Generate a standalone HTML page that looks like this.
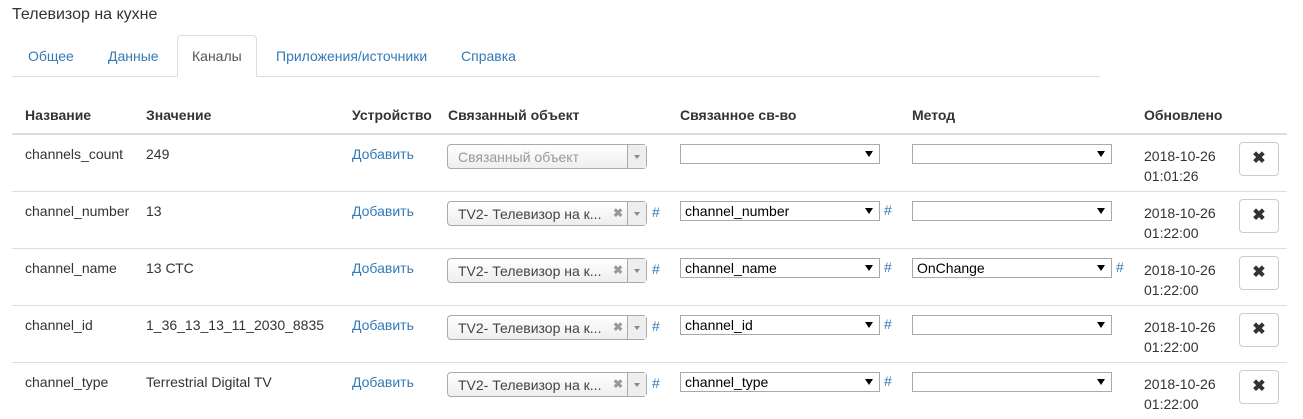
<html><head><style>
body{margin:0;width:1303px;height:419px;overflow:hidden;background:#fff;font-family:"Liberation Sans",sans-serif;font-size:14px;color:#333;position:relative}
.a{position:absolute;white-space:nowrap}
.l{color:#337ab7}
.th{font-weight:bold}
.hr{position:absolute;left:12px;width:1275px;height:1px;background:#ddd}
.s2{position:absolute;width:200px;height:25px;border:1px solid #aaa;border-radius:4px;background:linear-gradient(#fff,#eee);box-sizing:border-box;font-size:14px;color:#444}
.s2 span{position:absolute;left:10px;top:4px}
.s2 .x{left:165px;top:4px;color:#999;font-weight:bold;font-size:12px}
.s2 .ar{position:absolute;right:0;top:0;width:18px;height:23px;border-left:1px solid #aaa;background:#eee}
.s2 .ar:after{content:"";position:absolute;left:6px;top:10px;border:3px solid transparent;border-top:4px solid #888}
.sel{position:absolute;width:200px;height:20px;border:1px solid #a9a9a9;box-sizing:border-box;background:#fff;font-size:14px;color:#000}
.sel span{position:absolute;left:4px;top:1px}
.sel:after{content:"";position:absolute;right:6px;top:6px;border:4px solid transparent;border-top:6px solid #000;border-bottom:0}
.btn{position:absolute;left:1239px;width:40px;height:34px;border:1px solid #ccc;border-radius:4px;box-sizing:border-box;text-align:center;line-height:32px;font-weight:bold;font-size:16px;color:#333}
</style></head><body>
<div class="a" style="left:12px;top:6px;font-size:16px">Телевизор на кухне</div>
<div class="a" style="left:12px;top:76px;width:1088px;height:1px;background:#ddd"></div>
<div class="a" style="left:177px;top:35px;width:80px;height:42px;border:1px solid #ddd;border-bottom:1px solid #fff;border-radius:4px 4px 0 0;box-sizing:border-box;background:#fff"></div>
<div class="a l" style="left:28px;top:48px">Общее</div>
<div class="a l" style="left:108px;top:48px">Данные</div>
<div class="a" style="left:192px;top:48px;color:#555">Каналы</div>
<div class="a l" style="left:276px;top:48px">Приложения/источники</div>
<div class="a l" style="left:461px;top:48px">Справка</div>
<div class="a th" style="left:25px;top:107px">Название</div>
<div class="a th" style="left:146px;top:107px">Значение</div>
<div class="a th" style="left:352px;top:107px">Устройство</div>
<div class="a th" style="left:448px;top:107px">Связанный объект</div>
<div class="a th" style="left:680px;top:107px">Связанное св-во</div>
<div class="a th" style="left:912px;top:107px">Метод</div>
<div class="a th" style="left:1144px;top:107px">Обновлено</div>
<div class="hr" style="top:133px;height:2px"></div>

<div class="a" style="left:25px;top:146px">channels_count</div><div class="a" style="left:146px;top:146px">249</div><div class="a l" style="left:352px;top:146px">Добавить</div>
<div class="s2" style="left:447px;top:144px"><span style="color:#999">Связанный объект</span><div class="ar"></div></div>
<div class="sel" style="left:680px;top:144px"></div><div class="sel" style="left:912px;top:144px"></div>
<div class="a" style="left:1144px;top:146px;line-height:20px">2018-10-26<br>01:01:26</div><div class="btn" style="top:142px">✖</div>
<div class="hr" style="top:191px"></div>

<div class="a" style="left:25px;top:203px">channel_number</div><div class="a" style="left:146px;top:203px">13</div><div class="a l" style="left:352px;top:203px">Добавить</div>
<div class="s2" style="left:447px;top:201px"><span>TV2- Телевизор на к...</span><span class="x">✖</span><div class="ar"></div></div><div class="a l" style="left:652px;top:204px">#</div>
<div class="sel" style="left:680px;top:201px"><span>channel_number</span></div><div class="a l" style="left:884px;top:202px">#</div><div class="sel" style="left:912px;top:201px"></div>
<div class="a" style="left:1144px;top:203px;line-height:20px">2018-10-26<br>01:22:00</div><div class="btn" style="top:199px">✖</div>
<div class="hr" style="top:248px"></div>

<div class="a" style="left:25px;top:260px">channel_name</div><div class="a" style="left:146px;top:260px">13 СТС</div><div class="a l" style="left:352px;top:260px">Добавить</div>
<div class="s2" style="left:447px;top:258px"><span>TV2- Телевизор на к...</span><span class="x">✖</span><div class="ar"></div></div><div class="a l" style="left:652px;top:261px">#</div>
<div class="sel" style="left:680px;top:258px"><span>channel_name</span></div><div class="a l" style="left:884px;top:259px">#</div><div class="sel" style="left:912px;top:258px"><span>OnChange</span></div><div class="a l" style="left:1116px;top:259px">#</div>
<div class="a" style="left:1144px;top:260px;line-height:20px">2018-10-26<br>01:22:00</div><div class="btn" style="top:256px">✖</div>
<div class="hr" style="top:305px"></div>

<div class="a" style="left:25px;top:317px">channel_id</div><div class="a" style="left:146px;top:317px">1_36_13_13_11_2030_8835</div><div class="a l" style="left:352px;top:317px">Добавить</div>
<div class="s2" style="left:447px;top:315px"><span>TV2- Телевизор на к...</span><span class="x">✖</span><div class="ar"></div></div><div class="a l" style="left:652px;top:318px">#</div>
<div class="sel" style="left:680px;top:315px"><span>channel_id</span></div><div class="a l" style="left:884px;top:316px">#</div><div class="sel" style="left:912px;top:315px"></div>
<div class="a" style="left:1144px;top:317px;line-height:20px">2018-10-26<br>01:22:00</div><div class="btn" style="top:313px">✖</div>
<div class="hr" style="top:362px"></div>

<div class="a" style="left:25px;top:374px">channel_type</div><div class="a" style="left:146px;top:374px">Terrestrial Digital TV</div><div class="a l" style="left:352px;top:374px">Добавить</div>
<div class="s2" style="left:447px;top:372px"><span>TV2- Телевизор на к...</span><span class="x">✖</span><div class="ar"></div></div><div class="a l" style="left:652px;top:375px">#</div>
<div class="sel" style="left:680px;top:372px"><span>channel_type</span></div><div class="a l" style="left:884px;top:373px">#</div><div class="sel" style="left:912px;top:372px"></div>
<div class="a" style="left:1144px;top:374px;line-height:20px">2018-10-26<br>01:22:00</div><div class="btn" style="top:370px">✖</div>
</body></html>
